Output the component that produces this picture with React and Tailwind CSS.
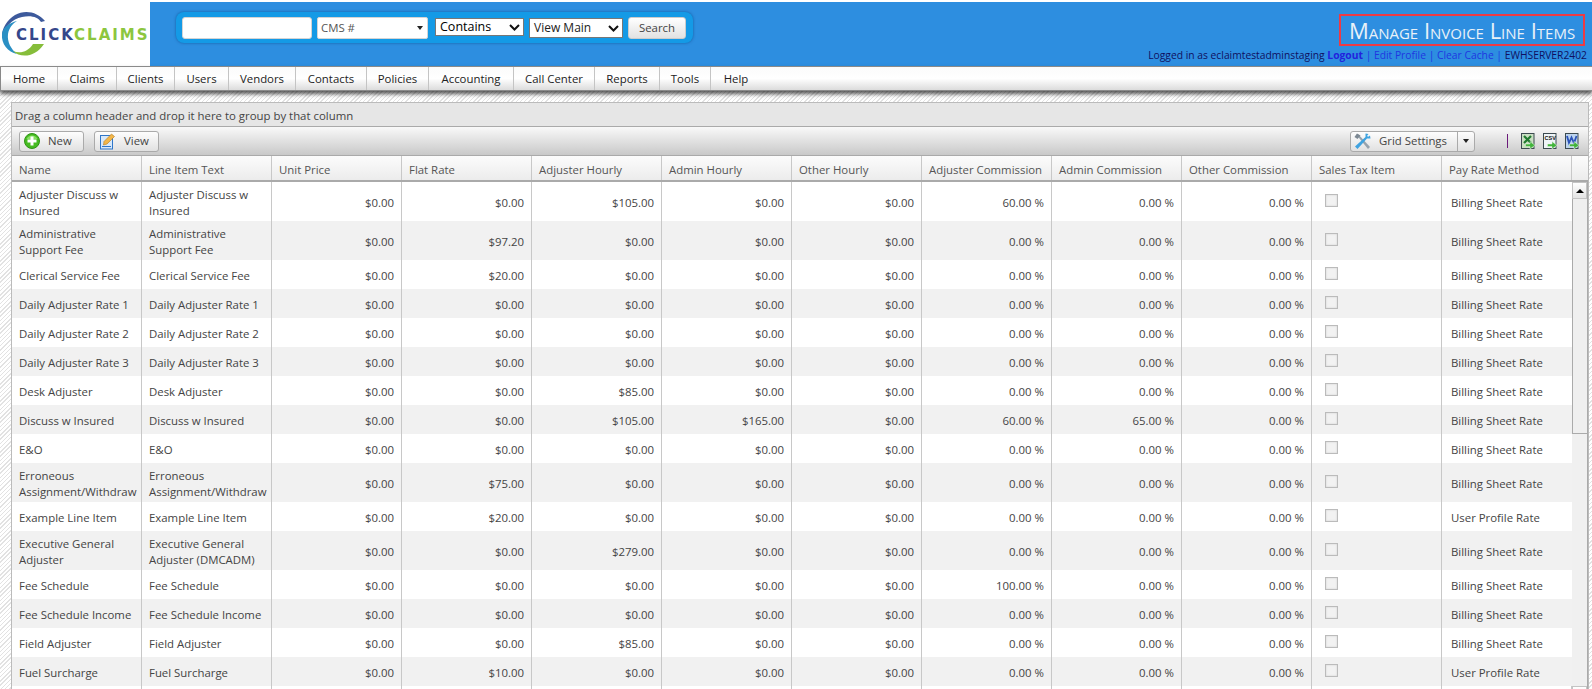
import React from 'react'

const font = 'font-["Open_Sans","Liberation_Sans",sans-serif]'

const navItems = [
  { label: 'Home', w: 'w-[58px]' },
  { label: 'Claims', w: 'w-[59px]' },
  { label: 'Clients', w: 'w-[58px]' },
  { label: 'Users', w: 'w-[54px]' },
  { label: 'Vendors', w: 'w-[67px]' },
  { label: 'Contacts', w: 'w-[71px]' },
  { label: 'Policies', w: 'w-[62px]' },
  { label: 'Accounting', w: 'w-[85px]' },
  { label: 'Call Center', w: 'w-[81px]' },
  { label: 'Reports', w: 'w-[65px]' },
  { label: 'Tools', w: 'w-[51px]' },
  { label: 'Help', w: 'w-[50px]' },
]

const columns = [
  'Name', 'Line Item Text', 'Unit Price', 'Flat Rate', 'Adjuster Hourly', 'Admin Hourly',
  'Other Hourly', 'Adjuster Commission', 'Admin Commission', 'Other Commission', 'Sales Tax Item', 'Pay Rate Method',
]

const B = 'Billing Sheet Rate'
const U = 'User Profile Rate'

const rows = [
  { name: 'Adjuster Discuss w Insured', text: 'Adjuster Discuss w Insured', tall: true, vals: ['$0.00', '$0.00', '$105.00', '$0.00', '$0.00', '60.00 %', '0.00 %', '0.00 %'], rate: B },
  { name: 'Administrative Support Fee', text: 'Administrative Support Fee', tall: true, vals: ['$0.00', '$97.20', '$0.00', '$0.00', '$0.00', '0.00 %', '0.00 %', '0.00 %'], rate: B },
  { name: 'Clerical Service Fee', text: 'Clerical Service Fee', vals: ['$0.00', '$20.00', '$0.00', '$0.00', '$0.00', '0.00 %', '0.00 %', '0.00 %'], rate: B },
  { name: 'Daily Adjuster Rate 1', text: 'Daily Adjuster Rate 1', vals: ['$0.00', '$0.00', '$0.00', '$0.00', '$0.00', '0.00 %', '0.00 %', '0.00 %'], rate: B },
  { name: 'Daily Adjuster Rate 2', text: 'Daily Adjuster Rate 2', vals: ['$0.00', '$0.00', '$0.00', '$0.00', '$0.00', '0.00 %', '0.00 %', '0.00 %'], rate: B },
  { name: 'Daily Adjuster Rate 3', text: 'Daily Adjuster Rate 3', vals: ['$0.00', '$0.00', '$0.00', '$0.00', '$0.00', '0.00 %', '0.00 %', '0.00 %'], rate: B },
  { name: 'Desk Adjuster', text: 'Desk Adjuster', vals: ['$0.00', '$0.00', '$85.00', '$0.00', '$0.00', '0.00 %', '0.00 %', '0.00 %'], rate: B },
  { name: 'Discuss w Insured', text: 'Discuss w Insured', vals: ['$0.00', '$0.00', '$105.00', '$165.00', '$0.00', '60.00 %', '65.00 %', '0.00 %'], rate: B },
  { name: 'E&O', text: 'E&O', vals: ['$0.00', '$0.00', '$0.00', '$0.00', '$0.00', '0.00 %', '0.00 %', '0.00 %'], rate: B },
  { name: 'Erroneous Assignment/Withdraw', text: 'Erroneous Assignment/Withdraw', tall: true, vals: ['$0.00', '$75.00', '$0.00', '$0.00', '$0.00', '0.00 %', '0.00 %', '0.00 %'], rate: B },
  { name: 'Example Line Item', text: 'Example Line Item', vals: ['$0.00', '$20.00', '$0.00', '$0.00', '$0.00', '0.00 %', '0.00 %', '0.00 %'], rate: U },
  { name: 'Executive General Adjuster', text: 'Executive General Adjuster (DMCADM)', tall: true, vals: ['$0.00', '$0.00', '$279.00', '$0.00', '$0.00', '0.00 %', '0.00 %', '0.00 %'], rate: B },
  { name: 'Fee Schedule', text: 'Fee Schedule', vals: ['$0.00', '$0.00', '$0.00', '$0.00', '$0.00', '100.00 %', '0.00 %', '0.00 %'], rate: B },
  { name: 'Fee Schedule Income', text: 'Fee Schedule Income', vals: ['$0.00', '$0.00', '$0.00', '$0.00', '$0.00', '0.00 %', '0.00 %', '0.00 %'], rate: B },
  { name: 'Field Adjuster', text: 'Field Adjuster', vals: ['$0.00', '$0.00', '$85.00', '$0.00', '$0.00', '0.00 %', '0.00 %', '0.00 %'], rate: B },
  { name: 'Fuel Surcharge', text: 'Fuel Surcharge', vals: ['$0.00', '$10.00', '$0.00', '$0.00', '$0.00', '0.00 %', '0.00 %', '0.00 %'], rate: U },
]

function Logo() {
  return (
    <div className="relative w-[150px] h-[64px] bg-white shrink-0 overflow-hidden">
      <svg className="absolute left-0 top-0" width="50" height="64" viewBox="0 0 50 64">
        <path d="M45 19 C38 10 25 7 15 13 C7 18 2 26 2 34 C5 25 12 17 22 15 C31 13 38 15 41 20 Z" fill="#3d5a9c" />
        <path d="M2 32 C1 42 8 50 17 52 C11 47 7 40 8 32 C9 26 13 21 17 19 C9 21 3 25 2 32Z" fill="#2a8fc4" />
        <path d="M13 49 C20 56 35 56 44 42 L33 42 C28 50 20 52 13 49Z" fill="#86bd3a" />
      </svg>
      <div className='absolute left-[16px] top-[24px] text-[15px] leading-[18px] font-bold tracking-[2px] font-["DejaVu_Sans",sans-serif] whitespace-nowrap'>
        <span className="text-[#34478a]">CLICK</span>
        <span className="text-[#8cc63f]">CLAIMS</span>
      </div>
    </div>
  )
}

function Chevron() {
  return (
    <svg width="11" height="7" viewBox="0 0 11 7">
      <path d="M1 1 L5.5 5.5 L10 1" fill="none" stroke="#111" strokeWidth="2" />
    </svg>
  )
}

function SearchBar() {
  return (
    <div className="mt-[10px] ml-[26px] h-[31px] w-[517px] rounded-[8px] bg-[#149ae6] flex items-start pt-[5px] pl-[6px] shadow-[0_0_3px_rgba(0,60,120,0.6)]">
      <input className="w-[130px] h-[22px] bg-white rounded-[3px] border border-[#d4d4d4]" />
      <div className="ml-[5px] w-[111px] h-[22px] bg-white border border-[#d4d4d4] rounded-[2px] flex items-center justify-between pl-[3px] pr-[3px] text-[11.4px] text-[#555]">
        <span>CMS #</span>
        <span className="w-0 h-0 border-x-[3.5px] border-x-transparent border-t-[4px] border-t-[#222] mr-[1px]" />
      </div>
      <div className="ml-[7px] mt-[1px] w-[89px] h-[18px] bg-white border border-[#777] flex items-center justify-between pl-[4px] pr-[3px] text-[12.5px] text-black">
        <span>Contains</span>
        <Chevron />
      </div>
      <div className="ml-[5px] mt-[1px] w-[94px] h-[20px] bg-white border border-[#777] flex items-center justify-between pl-[4px] pr-[3px] text-[12px] text-[#222]">
        <span>View Main</span>
        <Chevron />
      </div>
      <button className="ml-[5px] w-[58px] h-[22px] rounded-[3px] border border-[#ccc] bg-gradient-to-b from-white to-[#e2e2e2] text-[11.4px] text-[#444]">Search</button>
    </div>
  )
}

function Header() {
  return (
    <header className="flex h-[64px] mt-[2px] bg-[#2d8ee0]">
      <Logo />
      <SearchBar />
      <div className="ml-auto flex flex-col items-end pr-[5px]">
        <div className="mt-[12px] mr-[2px] h-[32px] w-[246px] border-2 border-[#ee3a44] flex items-center justify-center text-[22px] leading-none text-[#e8f1f8] [font-variant:small-caps] whitespace-nowrap">
          Manage Invoice Line Items
        </div>
        <div className="mt-[2px] text-[10.3px] leading-[14px] text-[#101060] whitespace-nowrap">
          Logged in as eclaimtestadminstaging <b className="text-[#2222dd]">Logout</b>
          <span className="text-[#2036e0]"> | Edit Profile | Clear Cache | </span>
          EWHSERVER2402
        </div>
      </div>
    </header>
  )
}

function Nav() {
  return (
    <nav className="relative h-[25px] shrink-0 flex border-y border-[#8a8a8a] bg-gradient-to-b from-[#fbfbfb] via-white to-[#dcdcdc] text-[11.4px] text-[#222] shadow-[0_3px_4px_rgba(0,0,0,0.65)]">
      {navItems.map((item, i) => (
        <div key={item.label} className={`${item.w} flex items-center justify-center whitespace-nowrap ${i < navItems.length - 1 ? 'border-r border-[#c4c4c4]' : ''} ${i === 0 ? 'border-l border-l-[#888]' : ''}`}>
          {item.label}
        </div>
      ))}
    </nav>
  )
}

function PlusIcon() {
  return (
    <svg width="16" height="16" viewBox="0 0 16 16">
      <circle cx="8" cy="8" r="7.5" fill="#46bb22" stroke="#2f9414" />
      <path d="M2.5 6 A6 6 0 0 1 13.5 6 Z" fill="#86e060" />
      <path d="M8 3.5 V12.5 M3.5 8 H12.5" stroke="#fff" strokeWidth="3" />
    </svg>
  )
}

function EditIcon() {
  return (
    <svg width="17" height="17" viewBox="0 0 17 17">
      <rect x="1.5" y="2.5" width="12" height="13.5" fill="#d7e8fa" stroke="#2f76c9" />
      <path d="M3 13.5 H12" stroke="#2f76c9" />
      <path d="M4.5 12 L5 8.5 L12.5 1 L15.5 3.5 L8 11Z" fill="#f2b64a" stroke="#b47a1a" strokeWidth="0.6" />
    </svg>
  )
}

function ToolsIcon() {
  return (
    <svg width="17" height="17" viewBox="0 0 17 17">
      <path d="M3 2.5 L4.5 1.5 L16 14 L14 16Z" fill="#97a3ad" />
      <path d="M0.5 4 L3 0.5 L6.5 2.5 L3.5 6Z" fill="#7c8893" />
      <path d="M14.5 1 L11.5 0.5 L11.5 4 L1 13.5 L3.5 16 L13 5.5 L16.5 5.5 L16 2.5 L14.2 3.8 L13 3Z" fill="#3fa3e0" />
    </svg>
  )
}

function ExportIcon({ bg, children }) {
  return (
    <svg width="14" height="17" viewBox="0 0 14 17">
      <rect x="0.5" y="0.5" width="12.5" height="15" fill={bg} stroke="#3c4a50" />
      {children}
      <path d="M4.5 11 H9 V8.5 L14 12.3 L9 16 V13.6 H4.5Z" fill="#42b43c" stroke="#eaf5e8" strokeWidth="0.5" />
    </svg>
  )
}

function ToolButton({ icon, label, className = '' }) {
  return (
    <div className={`h-[21px] w-[65px] flex items-center gap-[8px] pl-[4px] rounded-[3px] border border-[#aaa] bg-gradient-to-b from-[#fdfdfd] to-[#e1e1e1] ${className}`}>
      {icon}
      <span>{label}</span>
    </div>
  )
}

function Toolbar() {
  return (
    <div className="h-[30px] shrink-0 flex items-center border-y border-[#aaa] bg-gradient-to-b from-[#f9f9f9] to-[#c9c9c9] pl-[7px] text-[11.4px] text-[#444]">
      <ToolButton icon={<PlusIcon />} label="New" />
      <ToolButton icon={<EditIcon />} label="View" className="ml-[10px]" />
      <div className="ml-auto h-[21px] w-[125px] flex items-center rounded-[3px] border border-[#aaa] bg-gradient-to-b from-[#fdfdfd] to-[#e1e1e1]">
        <span className="ml-[3px] flex"><ToolsIcon /></span>
        <span className="ml-[8px] whitespace-nowrap">Grid Settings</span>
        <span className="ml-auto h-full w-[17px] border-l border-[#aaa] flex items-center justify-center">
          <span className="w-0 h-0 border-x-[3.5px] border-x-transparent border-t-[4px] border-t-[#222]" />
        </span>
      </div>
      <div className="ml-[32px] h-[14px] w-px bg-[#6b1a7a]" />
      <div className="ml-[13px] flex gap-[8px] mr-[9px]">
        <ExportIcon bg="#c9dfc2">
          <path d="M3 3 L10 10 M10 3 L3 10" stroke="#1f7a2e" strokeWidth="2.2" />
        </ExportIcon>
        <ExportIcon bg="#eef4f7">
          <text x="1.5" y="7" fontSize="5.5" fontWeight="700" fill="#111" fontFamily="Liberation Sans">CSV</text>
        </ExportIcon>
        <ExportIcon bg="#bcd3ee">
          <path d="M2 3 L4 10 L6.5 4.5 L9 10 L11.5 3" fill="none" stroke="#2a52b8" strokeWidth="1.8" />
        </ExportIcon>
      </div>
    </div>
  )
}

function Cell({ children, right, className = '' }) {
  return (
    <div className={`w-[130px] shrink-0 border-r border-[#c8c8c8] flex items-center pt-[2px] pl-[7px] ${right ? 'justify-end pr-[7px]' : 'pr-[4px]'} ${className}`}>
      {children}
    </div>
  )
}

function Scrollbar() {
  return (
    <div className="flex-1 bg-[#f0f0f0] flex flex-col border-r border-[#aaa]">
      <div className="h-[17px] shrink-0 border border-[#c4c4c4] bg-gradient-to-b from-white to-[#e4e4e4] flex items-center justify-center">
        <span className="w-0 h-0 border-x-[4px] border-x-transparent border-b-[4px] border-b-black" />
      </div>
      <div className="h-[235px] shrink-0 border-l border-b border-[#aaa] bg-[#efefef]" />
      <div className="h-[252px] shrink-0" />
      <div className="h-[17px] shrink-0 border border-[#c4c4c4] bg-gradient-to-b from-white to-[#e4e4e4]" />
    </div>
  )
}

function Grid() {
  return (
    <div className="flex-1 flex flex-col min-h-0">
      <div className="h-[26px] flex shrink-0 border-b-2 border-[#aaa] bg-gradient-to-b from-[#fcfcfc] to-[#ececec] text-[11.4px] text-[#555] whitespace-nowrap">
        {columns.map(c => (
          <Cell key={c} className="pt-[3px]">{c}</Cell>
        ))}
      </div>
      <div className="flex flex-1 min-h-0">
        <div className="w-[1560px] shrink-0 text-[11.4px] leading-[16px] text-[#444]">
          {rows.map((r, i) => (
            <div key={r.name} className={`flex ${r.tall ? 'h-[39px]' : 'h-[29px]'} ${i % 2 ? 'bg-[#f1f1f1]' : 'bg-white'}`}>
              <Cell>{r.name}</Cell>
              <Cell>{r.text}</Cell>
              {r.vals.map((v, j) => (
                <Cell key={j} right>{v}</Cell>
              ))}
              <Cell>
                <span className="ml-[6px] mb-[4px] w-[13px] h-[13px] border border-[#bbb] bg-[#f2f2f2] shadow-[inset_0_0_2px_rgba(0,0,0,0.15)]" />
              </Cell>
              <Cell className="pl-[9px] border-r-0 whitespace-nowrap">{r.rate}</Cell>
            </div>
          ))}
          <div className="flex h-[29px] bg-white">
            {columns.map(c => (
              <Cell key={c} />
            ))}
          </div>
        </div>
        <Scrollbar />
      </div>
    </div>
  )
}

export default function App() {
  return (
    <div className={`h-screen w-full overflow-hidden flex flex-col bg-white ${font}`}>
      <Header />
      <Nav />
      <main className="flex-1 min-h-0 pt-[11px] pl-[11px] pr-[3px] bg-[repeating-linear-gradient(135deg,#e2e2e2_0,#e2e2e2_1px,#ffffff_1px,#ffffff_3px)]">
        <div className="h-full flex flex-col border-l border-t border-r border-[#bbb] bg-white">
          <div className="h-[23px] shrink-0 flex items-center pl-[3px] pt-[2px] bg-[#e6e6e6] text-[11.4px] text-[#444]">
            Drag a column header and drop it here to group by that column
          </div>
          <Toolbar />
          <Grid />
        </div>
      </main>
    </div>
  )
}
